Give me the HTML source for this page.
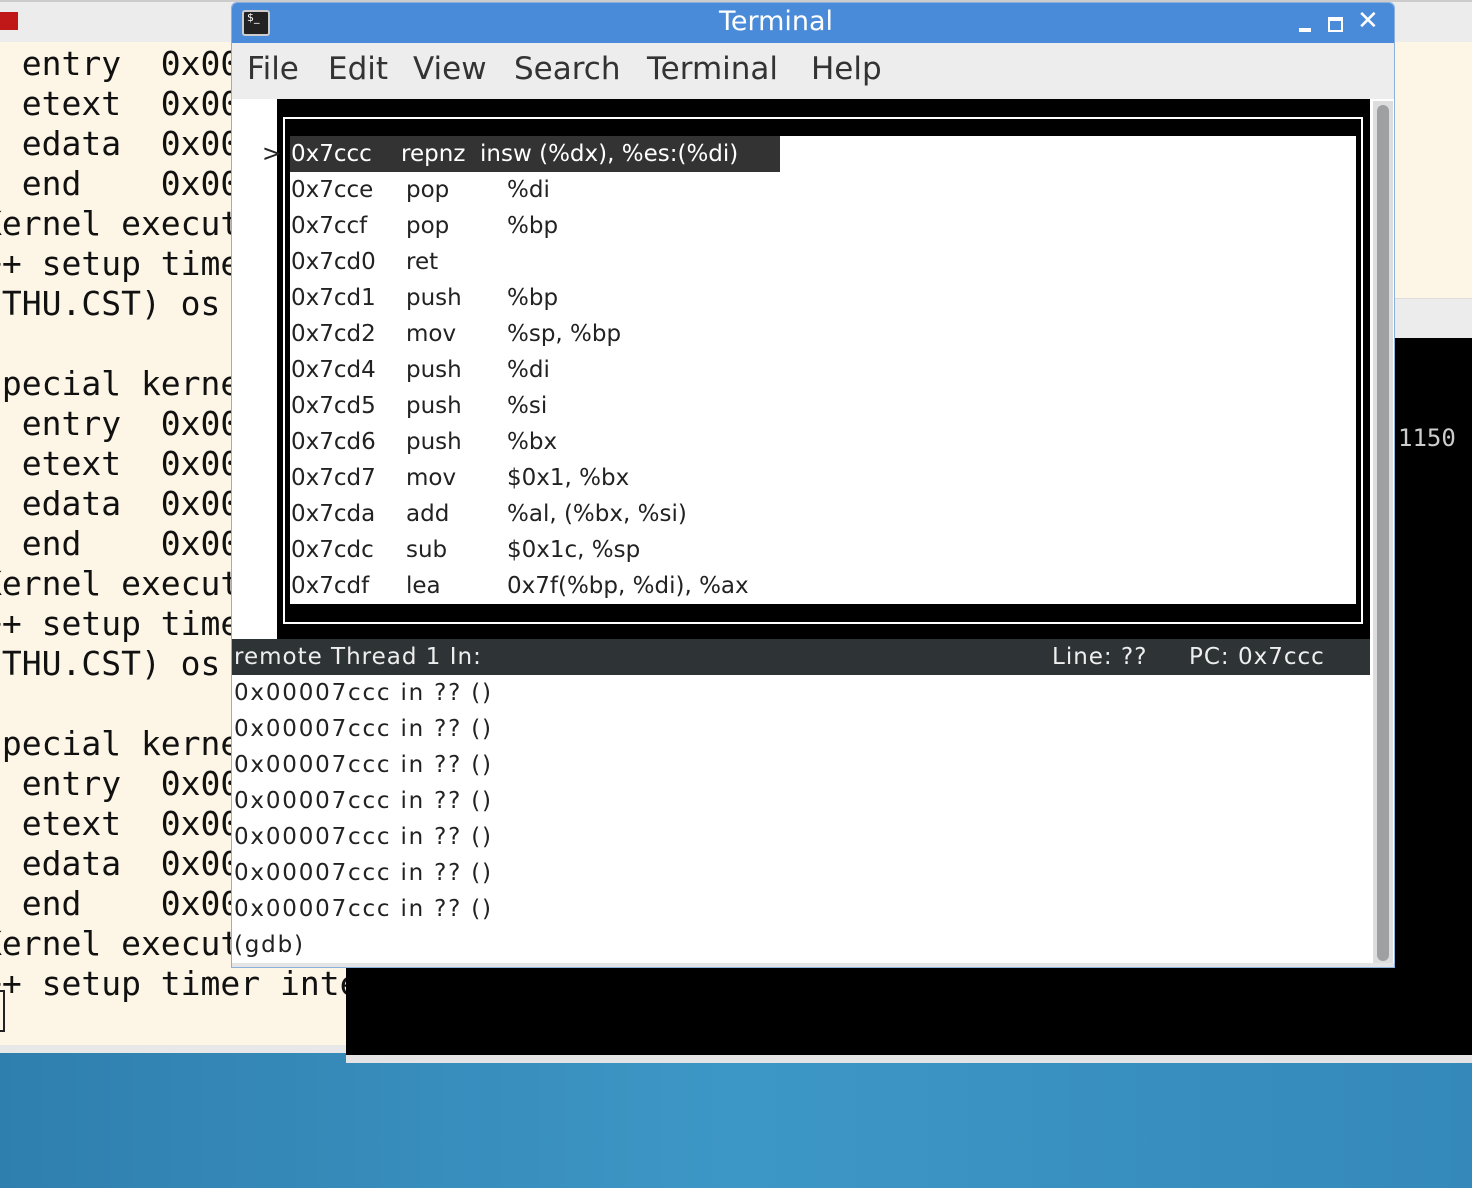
<!DOCTYPE html>
<html><head><meta charset="utf-8"><style>
*{margin:0;padding:0;box-sizing:border-box}
body{width:1472px;height:1188px;overflow:hidden;position:relative;background:linear-gradient(90deg,#2f7fae,#3d97c6 50%,#3489ba);font-family:"DejaVu Sans","Liberation Sans",sans-serif}
.a{position:absolute}
.mono{font-family:"DejaVu Sans Mono","Liberation Mono",monospace;font-size:33px;color:#111;white-space:pre;line-height:40px}
.t{position:absolute;font-size:23px;color:#222;white-space:pre;line-height:36px}
.m{position:absolute;top:48px;font-size:31px;color:#333}
</style></head><body>
<div class="a" style="left:0;top:0;width:1472px;height:42px;background:#ececec;border-top:2px solid #ccc"></div>
<div class="a" style="left:0;top:12px;width:18px;height:18px;background:#c01818"></div>
<div class="a" style="left:0;top:42px;width:1472px;height:1003px;background:#fdf5e5"></div>
<div class="a" style="left:0;top:1045px;width:346px;height:8px;background:#e8e8e8"></div>
<div class="a mono" style="left:-18px;top:44px">  entry  0x00
  etext  0x00
  edata  0x00
  end    0x00
Kernel execut
++ setup time
(THU.CST) os

Special kerne
  entry  0x00
  etext  0x00
  edata  0x00
  end    0x00
Kernel execut
++ setup time
(THU.CST) os

Special kerne
  entry  0x00
  etext  0x00
  edata  0x00
  end    0x00
Kernel execut
++ setup timer inte</div>
<div class="a" style="left:0;top:990px;width:5px;height:42px;border:2px solid #222;border-left:none"></div>
<div class="a" style="left:1395px;top:298px;width:77px;height:40px;background:#ececec;border-top:1px solid #ddd"></div>
<div class="a" style="left:346px;top:338px;width:1126px;height:720px;background:#000"></div>
<div class="a" style="left:346px;top:1055px;width:1126px;height:8px;background:#e4e4e4"></div>
<div class="a mono" style="left:1398px;top:418px;color:#ccc;font-size:24px">1150</div>
<div class="a" style="left:231px;top:2px;width:1164px;height:966px;background:#fff;border:1px solid #8ab0de;border-radius:6px 6px 0 0;overflow:hidden">
 <div class="a" style="left:0;top:0;width:1164px;height:40px;background:#4a8bd9"></div>
 <div class="a" style="left:10px;top:7px;width:28px;height:26px;background:#222;border:2px solid #ccc;border-radius:3px;color:#fff;font-size:11px;line-height:12px;padding-left:3px">$_</div>
 <div class="a" style="left:0;top:3px;width:1088px;text-align:center;color:#fff;font-size:27px">Terminal</div>
 <div class="a" style="left:1067px;top:25px;width:12px;height:4px;background:#fff"></div>
 <div class="a" style="left:1096px;top:14px;width:15px;height:15px;border:2px solid #fff;border-top-width:4px"></div>
 <div class="a" style="left:1125px;top:3px;color:#fff;font-size:26px;font-weight:bold">✕</div>
 <div class="a" style="left:0;top:40px;width:1164px;height:56px;background:#ededed"></div>
 <div class="m" style="left:15px">File</div>
 <div class="m" style="left:96px">Edit</div>
 <div class="m" style="left:181px">View</div>
 <div class="m" style="left:282px">Search</div>
 <div class="m" style="left:415px">Terminal</div>
 <div class="m" style="left:579px">Help</div>
 <div class="a" style="left:1141px;top:98px;width:20px;height:866px;background:#ddd"></div>
 <div class="a" style="left:1145px;top:102px;width:12px;height:856px;background:#9fa0a2;border-radius:6px"></div>
 <div class="a" style="left:45px;top:96px;width:1093px;height:540px;background:#000"></div>
 <div class="a" style="left:51px;top:114px;width:1080px;height:507px;border:2px solid #fff"></div>
 <div class="a" style="left:58px;top:133px;width:1066px;height:468px;background:#fff"></div>
 <div class="a" style="left:58px;top:133px;width:490px;height:36px;background:#333"></div>
 <div class="t" style="left:30px;top:133px">&gt;</div>
 <div class="t" style="left:59px;top:133px;color:#fff">0x7ccc    repnz  insw (%dx), %es:(%di)</div>
 <div class="t" style="left:59px;top:169px">0x7cce
0x7ccf
0x7cd0
0x7cd1
0x7cd2
0x7cd4
0x7cd5
0x7cd6
0x7cd7
0x7cda
0x7cdc
0x7cdf</div>
 <div class="t" style="left:174px;top:169px">pop
pop
ret
push
mov
push
push
push
mov
add
sub
lea</div>
 <div class="t" style="left:275px;top:169px">%di
%bp

%bp
%sp, %bp
%di
%si
%bx
$0x1, %bx
%al, (%bx, %si)
$0x1c, %sp
0x7f(%bp, %di), %ax</div>
 <div class="a" style="left:0;top:636px;width:1138px;height:36px;background:#2e3436"></div>
 <div class="t" style="left:2px;top:636px;color:#eee;letter-spacing:1px">remote Thread 1 In:</div>
 <div class="t" style="left:820px;top:636px;color:#eee;letter-spacing:1px">Line: ??     PC: 0x7ccc</div>
 <div class="t" style="left:2px;top:672px;letter-spacing:1.8px">0x00007ccc in ?? ()
0x00007ccc in ?? ()
0x00007ccc in ?? ()
0x00007ccc in ?? ()
0x00007ccc in ?? ()
0x00007ccc in ?? ()
0x00007ccc in ?? ()
(gdb)</div>
 <div class="a" style="left:0;top:960px;width:1164px;height:6px;background:#e4e4e4"></div>
</div>
</body></html>
